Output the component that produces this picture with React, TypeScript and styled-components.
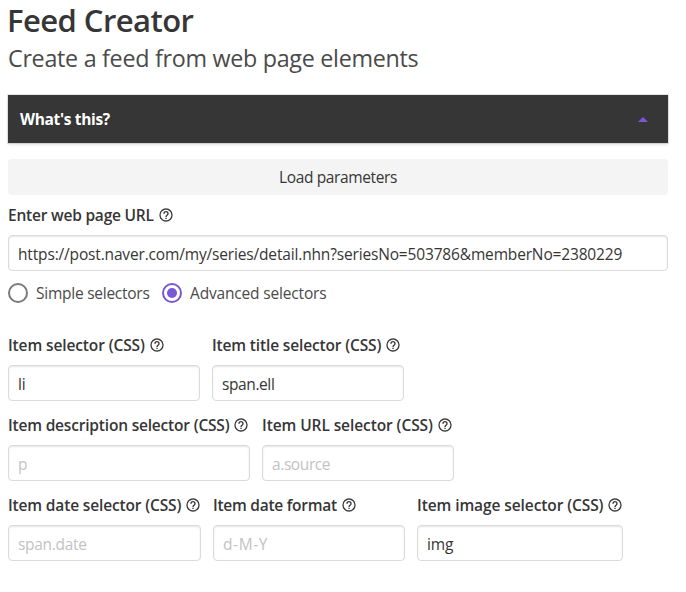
import React from "react";
import styled, { createGlobalStyle } from "styled-components";

const GlobalStyle = createGlobalStyle`
  *, *::before, *::after { box-sizing: border-box; }
  html { overflow: hidden; background: #fff; }
  body {
    margin: 0;
    color: #363636;
    font-family: "Segoe UI", "Open Sans", "Noto Sans", sans-serif;
    font-size: 15.5px;
    line-height: 24px;
  }
`;

const Page = styled.main`
  height: 592px;
  padding: 1px 18px 0 8px;
`;

const Title = styled.h1`
  margin: 0 0 0 -1px;
  font-size: 31px;
  font-weight: 600;
  line-height: 38px;
  white-space: nowrap;
`;

const Subtitle = styled.h2`
  margin: 1px 0 19px;
  color: #4a4a4a;
  font-size: 23.3px;
  font-weight: 400;
  line-height: 36px;
  white-space: nowrap;
`;

const Tracked = styled.span<{ $track?: number }>`
  letter-spacing: ${(p) => p.$track ?? 0}px;
  white-space: nowrap;
`;

const Banner = styled.button`
  display: flex;
  align-items: center;
  justify-content: space-between;
  width: 100%;
  height: 48px;
  padding: 0 20px 0 12px;
  border: 0;
  background: #363636;
  color: #fff;
  font: inherit;
  font-weight: 700;
  box-shadow: 0 2px 3px rgba(10, 10, 10, 0.1), 0 0 0 1px rgba(10, 10, 10, 0.1);
`;

const LoadButton = styled.button`
  display: flex;
  align-items: center;
  justify-content: center;
  width: 100%;
  height: 36px;
  margin: 16px 0 8px;
  padding: 0;
  border: 0;
  border-radius: 4px;
  background: #f4f4f4;
  color: #363636;
  font: inherit;
`;

const Field = styled.div<{ $width?: number }>`
  width: ${(p) => (p.$width ? `${p.$width}px` : "100%")};
  flex: none;
`;

const Label = styled.label`
  display: flex;
  align-items: center;
  gap: 4px;
  height: 24px;
  margin-bottom: 8px;
  font-weight: 600;
  white-space: nowrap;
`;

const Input = styled.input<{ $track?: number }>`
  display: block;
  width: 100%;
  height: 36px;
  padding: 3px 9px 1px;
  border: 1px solid #dbdbdb;
  border-radius: 4px;
  outline: 0;
  background: #fff;
  box-shadow: inset 0 1px 2px rgba(10, 10, 10, 0.1);
  color: #363636;
  font: inherit;
  letter-spacing: ${(p) => p.$track ?? 0}px;

  &::placeholder {
    color: #c3c3c3;
    opacity: 1;
  }
`;

const Radios = styled.div`
  display: flex;
  gap: 12px;
  height: 20px;
  margin: 12px 0 30px;
`;

const RadioLabel = styled.label<{ $width: number }>`
  display: flex;
  align-items: center;
  gap: 8px;
  width: ${(p) => p.$width}px;
  color: #4a4a4a;
`;

const Radio = styled.span<{ $checked?: boolean }>`
  display: grid;
  place-items: center;
  flex: none;
  width: 20px;
  height: 20px;
  border: 2px solid ${(p) => (p.$checked ? "#7957d5" : "#7a7a7a")};
  border-radius: 50%;

  &::after {
    content: "";
    width: 10px;
    height: 10px;
    border-radius: 50%;
    background: ${(p) => (p.$checked ? "#7957d5" : "transparent")};
  }
`;

const Row = styled.div`
  display: flex;
  gap: 12px;
  margin-bottom: 12px;
`;

const HelpSvg = styled.svg`
  flex: none;
  width: 16px;
  height: 16px;
  fill: #363636;
`;

const Caret = styled.svg`
  width: 10px;
  height: 5px;
  fill: #7957d5;
`;

function HelpIcon() {
  return (
    <HelpSvg viewBox="0 0 24 24" aria-hidden="true">
      <path d="M11,18H13V16H11V18M12,2A10,10 0 0,0 2,12A10,10 0 0,0 12,22A10,10 0 0,0 22,12A10,10 0 0,0 12,2M12,20C7.59,20 4,16.41 4,12C4,7.59 7.59,4 12,4C16.41,4 20,7.59 20,12C20,16.41 16.41,20 12,20M12,6A4,4 0 0,0 8,10H10A2,2 0 0,1 12,8A2,2 0 0,1 14,10C14,12 11,11.75 11,15H13C13,12.75 16,12.5 16,10A4,4 0 0,0 12,6Z" />
    </HelpSvg>
  );
}

interface FieldProps {
  label: string;
  width?: number;
  value?: string;
  placeholder?: string;
  labelTrack?: number;
  track?: number;
}

function TextField({ label, width, value, placeholder, labelTrack = -0.15, track = -0.1 }: FieldProps) {
  return (
    <Field $width={width}>
      <Label>
        <Tracked $track={labelTrack}>{label}</Tracked>
        <HelpIcon />
      </Label>
      <Input defaultValue={value} placeholder={placeholder} $track={track} spellCheck={false} />
    </Field>
  );
}

const rows: FieldProps[][] = [
  [
    { label: "Item selector (CSS)", width: 192, value: "li", labelTrack: -0.12 },
    { label: "Item title selector (CSS)", width: 192, value: "span.ell", track: -0.4 },
  ],
  [
    { label: "Item description selector (CSS)", width: 242, placeholder: "p", labelTrack: -0.19 },
    { label: "Item URL selector (CSS)", width: 192, placeholder: "a.source", labelTrack: -0.09, track: -0.4 },
  ],
  [
    { label: "Item date selector (CSS)", width: 193, placeholder: "span.date", track: -0.3 },
    { label: "Item date format", width: 192, placeholder: "d-M-Y", labelTrack: -0.26, track: 0.6 },
    { label: "Item image selector (CSS)", width: 206, value: "img", labelTrack: -0.09 },
  ],
];

export default function App() {
  return (
    <>
      <GlobalStyle />
      <Page>
        <Title><Tracked $track={-0.55}>Feed Creator</Tracked></Title>
        <Subtitle><Tracked $track={-0.29}>Create a feed from web page elements</Tracked></Subtitle>
        <Banner>
          <Tracked $track={-0.33}>What's this?</Tracked>
          <Caret viewBox="0 0 10 5"><path d="M0 5L5 0L10 5Z" /></Caret>
        </Banner>
        <LoadButton><Tracked $track={-0.38}>Load parameters</Tracked></LoadButton>
        <TextField
          label="Enter web page URL"
          value="https://post.naver.com/my/series/detail.nhn?seriesNo=503786&memberNo=2380229"
          labelTrack={-0.21}
          track={-0.16}
        />
        <Radios>
          <RadioLabel $width={142}><Radio /><Tracked $track={-0.25}>Simple selectors</Tracked></RadioLabel>
          <RadioLabel $width={165}><Radio $checked /><Tracked $track={-0.17}>Advanced selectors</Tracked></RadioLabel>
        </Radios>
        {rows.map((fields) => (
          <Row key={fields[0].label}>
            {fields.map((field) => <TextField key={field.label} {...field} />)}
          </Row>
        ))}
      </Page>
    </>
  );
}
